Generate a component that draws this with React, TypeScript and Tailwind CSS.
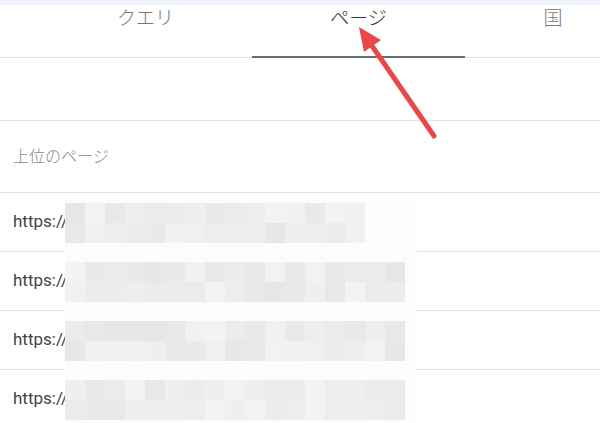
import React from "react";

const tabs = [
  { label: "クエリ", width: "w-[213px]", active: false },
  { label: "ページ", width: "w-[213px]", active: true },
  { label: "国", width: "w-[176px]", active: false },
];

// redaction mosaic over the urls
const mosaics = [
  { top: 3, cols: 15 },
  { top: 62, cols: 17 },
  { top: 121, cols: 17 },
  { top: 180, cols: 17 },
];

function shade(row: number, col: number, sub: number) {
  const n = Math.sin(row * 91.7 + col * 12.9898 + sub * 78.233) * 43758.5453;
  const f = n - Math.floor(n);
  const v = Math.round(231 + f * 12);
  return `rgb(${v},${v},${v})`;
}

function Mosaic({ row, cols }: { row: number; cols: number }) {
  return (
    <div className="flex flex-col">
      {[0, 1].map((sub) => (
        <div key={sub} className="flex">
          {Array.from({ length: cols }).map((_, c) => (
            <div
              key={c}
              className="h-5 w-5"
              style={{ backgroundColor: shade(row, c, sub) }}
            />
          ))}
        </div>
      ))}
    </div>
  );
}

export default function App() {
  const font = { fontFamily: "Roboto, 'Noto Sans CJK JP', sans-serif" };
  return (
    <div className="relative h-[423px] w-[600px] overflow-hidden bg-white" style={font}>
      <div className="h-[5px] bg-[#eef2fa]" />

      <div className="flex h-[53px] border-b border-[#e2e2e2] pl-[39px]">
        {tabs.map((t) => (
          <div
            key={t.label}
            className={`relative flex shrink-0 ${t.width} justify-center text-[19px] font-light ${
              t.active ? "text-[#333]" : "text-[#777]"
            }`}
          >
            {t.label}
            {t.active && (
              <div className="absolute bottom-[-1px] left-0 right-0 h-[2px] bg-[#6a6a6a]" />
            )}
          </div>
        ))}
      </div>

      <div className="h-[63px] border-b border-[#e2e2e2]" />

      <div className="flex h-[72px] items-center border-b border-[#e2e2e2] pl-[13px] text-[16px] font-light text-[#888]">
        上位のページ
      </div>

      {[0, 1, 2, 3].map((i) => (
        <div
          key={i}
          className="flex h-[59px] items-center border-b border-[#e2e2e2] pl-[13px] text-[17px] text-[#444]"
        >
          https://
        </div>
      ))}

      <div className="absolute left-[65px] top-[200px] h-[223px] w-[352px] bg-[#fcfcfc]">
        {mosaics.map((m, i) => (
          <div key={i} className="absolute left-0" style={{ top: m.top }}>
            <Mosaic row={i} cols={m.cols} />
          </div>
        ))}
      </div>

      <svg className="pointer-events-none absolute inset-0" width="600" height="423">
        <line x1="434" y1="136" x2="370" y2="43" stroke="#ea4848" strokeWidth="5" strokeLinecap="round" />
        <polygon points="359,27 381,40 364,52" fill="#ea4848" />
      </svg>
    </div>
  );
}
